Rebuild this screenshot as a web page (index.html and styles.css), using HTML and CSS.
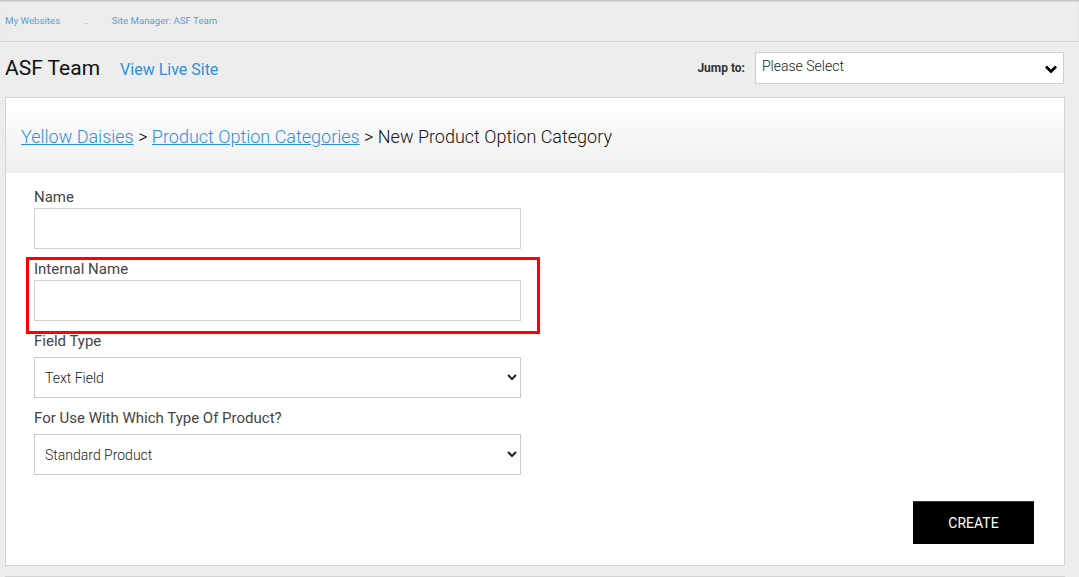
FILE: index.html
```html
<!DOCTYPE html>
<html lang="en">
  <head>
    <meta charset="UTF-8" />
    <meta name="viewport" content="width=device-width, initial-scale=1.0" />
    <title>New Product Option Category</title>
    <link rel="stylesheet" href="styles.css">
  </head>
  <body>
    <div class="top-bar">
      <a href="#">My Websites</a>
      <span class="sep">.</span>
      <a href="#">Site Manager: ASF Team</a>
    </div>

    <div class="site-header">
      <h1>ASF Team</h1>
      <a href="#" class="live-link">View Live Site</a>
      <div class="jump">
        <label for="jump-select">Jump to:</label>
        <div class="jump-select-wrap">
          <select id="jump-select">
            <option>Please Select</option>
          </select>
          <svg class="jump-arrow" width="14" height="10" viewBox="0 0 14 10">
            <path d="M2 2.5 L7 7.5 L12 2.5" fill="none" stroke="#000" stroke-width="2.8" />
          </svg>
        </div>
      </div>
    </div>

    <div class="panel">
      <div class="panel-head">
        <a href="#">Yellow Daisies</a> &gt; <a href="#">Product Option Categories</a> &gt; New Product Option Category
      </div>
      <form class="panel-body">
        <div class="form-group">
          <label for="name">Name</label>
          <input type="text" id="name" />
        </div>
        <div class="form-group">
          <label for="internal">Internal Name</label>
          <input type="text" id="internal" />
          <!-- annotation frame round this field -->
          <div class="highlight-box"></div>
        </div>
        <div class="form-group">
          <label for="fieldtype">Field Type</label>
          <select id="fieldtype">
            <option>Text Field</option>
          </select>
        </div>
        <div class="form-group">
          <label for="producttype">For Use With Which Type Of Product?</label>
          <select id="producttype">
            <option>Standard Product</option>
          </select>
        </div>
        <div class="actions">
          <button type="button">CREATE</button>
        </div>
      </form>
    </div>
    <div class="page-foot"></div>
  </body>
</html>
```

FILE: styles.css
```css
body {
  margin: 0;
  font-family: Roboto, "Liberation Sans", sans-serif;
  background-color: #ecedec;
  color: #222;
}
a {
  color: #2f8fdd;
  text-decoration: none;
}
.top-bar {
  height: 41px;
  border-bottom: 1px solid #d3d4d4;
  box-shadow: inset 0 2px 2px -1px #b9b9b9;
  display: flex;
  align-items: center;
  padding-left: 5px;
  font-size: 9.7px;
}
.top-bar a {
  color: #5c9ddc;
}
.top-bar .sep {
  color: #888;
  margin: 0 24px 0 25px;
}
.site-header {
  height: 55px;
  display: flex;
  align-items: center;
  padding: 0 15px 4px 5px;
  box-sizing: border-box;
}
.site-header h1 {
  margin: 0;
  font-size: 21px;
  font-weight: 400;
  color: #111;
}
.live-link {
  margin-left: 20px;
  margin-top: 3px;
  font-size: 16px;
}
.jump {
  margin-left: auto;
  display: flex;
  align-items: center;
}
.jump label {
  font-size: 12px;
  font-weight: bold;
  color: #333;
  margin-right: 10px;
}
.jump-select-wrap {
  position: relative;
}
.jump-select-wrap select {
  display: block;
  appearance: none;
  width: 309px;
  height: 32px;
  border: 1px solid #cfcfcf;
  background: #fff;
  font-family: inherit;
  font-size: 14px;
  font-weight: 300;
  color: #222;
  padding: 0 6px 3px;
}
.jump-arrow {
  position: absolute;
  right: 6px;
  top: 12px;
}
.panel {
  margin: 0 14px 0 5px;
  border: 1px solid #d4d4d4;
  background: #fff;
}
.panel-head {
  height: 75px;
  line-height: 77px;
  padding-left: 15px;
  font-size: 18px;
  font-weight: 300;
  color: #111;
  background: linear-gradient(#fff, #efefef);
  white-space: nowrap;
}
.panel-head a {
  text-decoration: underline;
}
.panel-body {
  padding: 15px 28px 21px 28px;
}
.form-group {
  width: 487px;
  margin-bottom: 11px;
  position: relative;
}
.form-group label {
  display: block;
  font-size: 15px;
  line-height: 18px;
  color: #444;
  margin-bottom: 2px;
}
.form-group input,
.form-group select {
  display: block;
  width: 100%;
  height: 41px;
  box-sizing: border-box;
  border: 1px solid #d3d3d3;
  background: #fff;
  font-family: inherit;
  font-size: 14px;
  font-weight: 300;
  color: #222;
}
.form-group select {
  margin-top: 7px;
  padding-left: 6px;
  border-color: #cbcbcb;
}
.highlight-box {
  position: absolute;
  left: -8px;
  right: -19px;
  top: -3px;
  bottom: -13px;
  border: 3px solid #f00;
}
.actions {
  display: flex;
  justify-content: flex-end;
  margin-top: 26px;
}
button {
  width: 121px;
  height: 43px;
  background-color: #000;
  color: #fff;
  border: none;
  border-top: 1px solid #333;
  font-family: inherit;
  font-size: 14px;
  margin-right: 2px;
  cursor: pointer;
}
.page-foot {
  margin: 10px 14px 0 5px;
  border-top: 1px solid #d4d4d4;
}
```
